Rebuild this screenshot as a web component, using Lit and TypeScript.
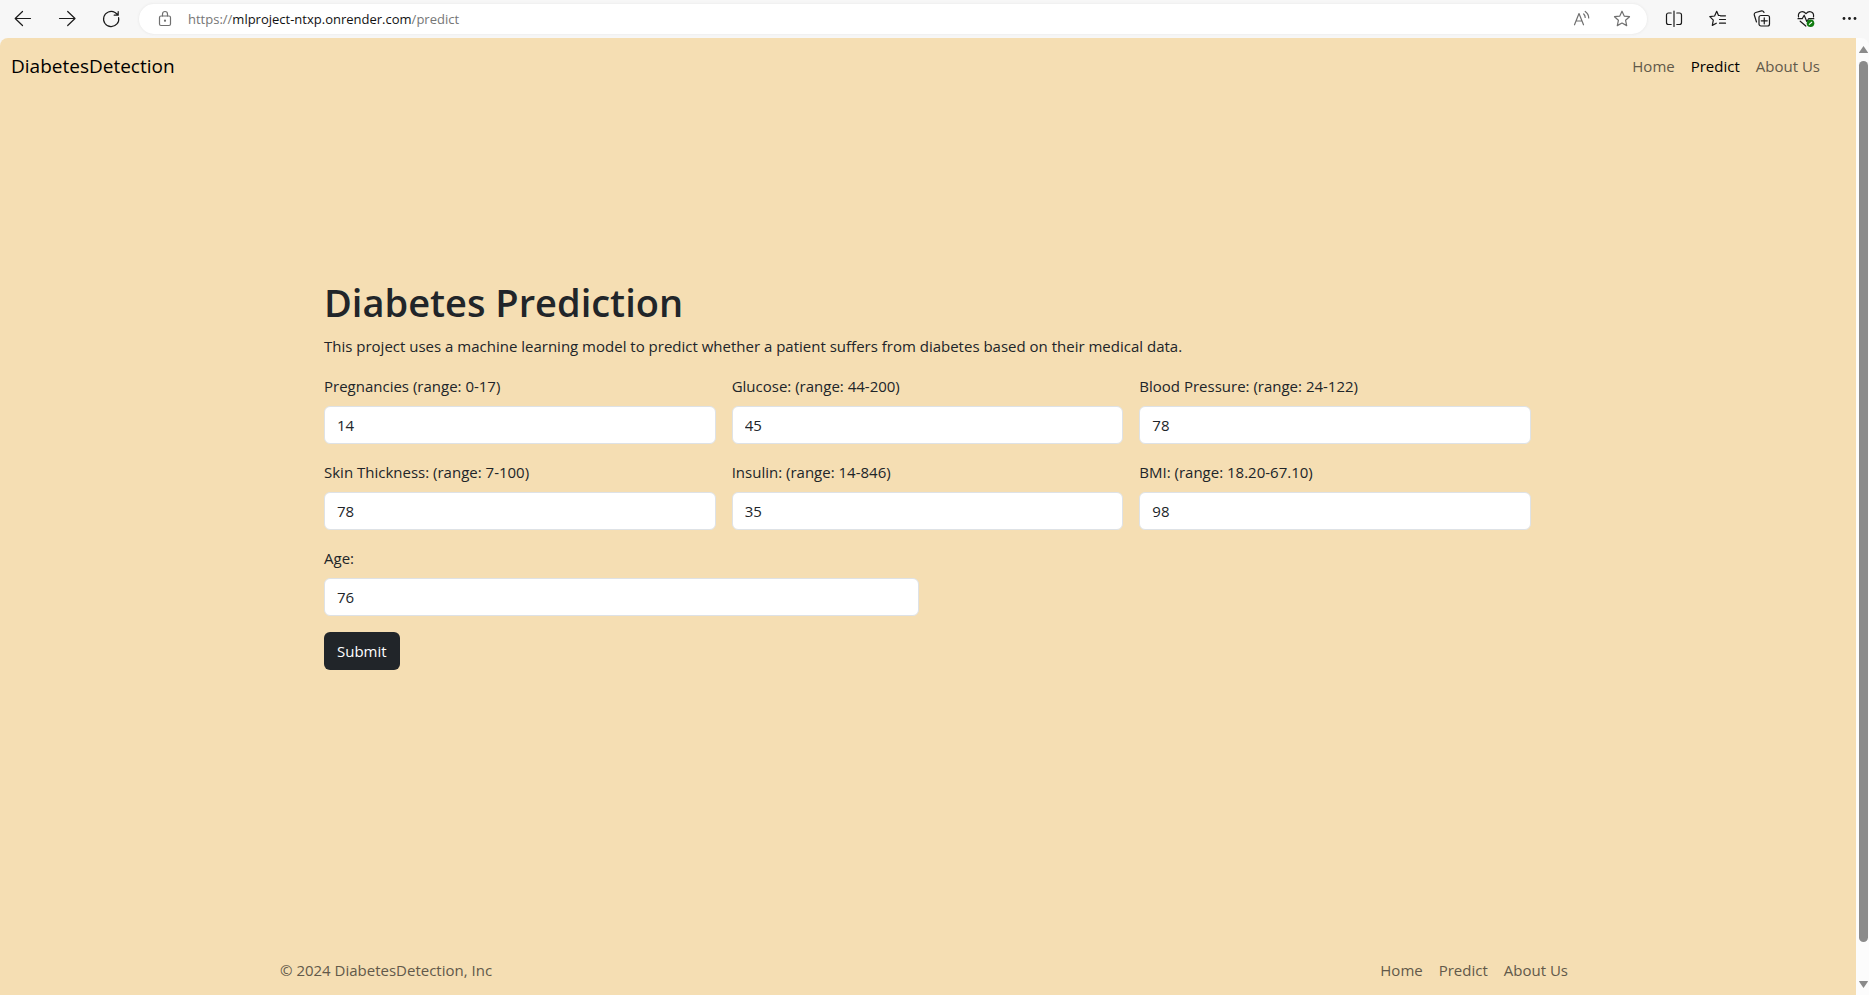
import { LitElement, html, css, svg } from 'lit';
import { customElement, property } from 'lit/decorators.js';

const stroke = (body: unknown) => svg`<g fill="none" stroke="currentColor" stroke-width="1.2" stroke-linecap="round" stroke-linejoin="round">${body}</g>`;

const ICONS: Record<string, unknown> = {
  back: stroke(svg`<path d="M17.500 9.500H2.500M9.500 2.500 2.200 9.500 9.500 16.500"/>`),
  forward: stroke(svg`<path d="M2.500 9.500h15.300M10.700 2.500 18 9.500 10.700 16.500"/>`),
  reload: stroke(svg`<path d="M17.600 8.500A7.600 7.600 0 1 1 14 3.500L17 5.800M17.200 2.500V6.200H13.200"/>`),
  lock: stroke(svg`<rect x="4.500" y="7" width="11" height="9.500" rx="1.500"/><path d="M7.500 7V5a2.500 2.500 0 0 1 5 0v2"/><circle cx="10" cy="11.700" r=".5" fill="currentColor"/>`),
  read: stroke(svg`<path d="M2.500 15.800 7 4.500 11.500 15.800M4 12h6M11.700 5q1.500 1.500 1.500 3.500M13.200 2.500q3.500 2.500 3.500 6.500"/>`),
  star: stroke(svg`<path d="M10 2.200 12.200 7.100 17.500 7.700 13.600 11.300 14.700 16.600 10 14 5.300 16.600 6.400 11.300 2.500 7.700 7.800 7.100Z"/>`),
  split: stroke(svg`<path d="M7.200 4H4.500A2 2 0 0 0 2.500 6v7.500a2 2 0 0 0 2 2h2.700M12.800 4h2.700a2 2 0 0 1 2 2v7.500a2 2 0 0 1-2 2h-2.700M10 2v15.500"/>`),
  favorites: stroke(svg`<path d="M12 6.500H10.500L8.700 2.300 6.600 7 1.800 7.600 5.300 11.200 4.300 16.400 8.300 14.200M12.500 6.800h5M11.500 10.500h6M11.500 14.200h6"/>`),
  collections: stroke(svg`<rect x="7" y="6.500" width="10.500" height="10.500" rx="2"/><path d="M12.250 8.800v6M9.250 11.800h6M4.500 13 2.300 6a2 2 0 0 1 1.400-2.500L9.500 1.900a2 2 0 0 1 2.500 1.600"/>`),
  health: svg`${stroke(svg`<path d="M2.500 7.800C1.700 3 6.600.8 10 4.600 13.400.8 18.300 3 17.500 7.800M2 9.700h4.200l2-3.500 2.600 6.300 1.800-2.800h5.200M4.200 12.200 9.800 17"/>`)}<circle cx="14.500" cy="14.300" r="3.800" fill="#107c10"/><path d="m13 15.600 3-2.600" stroke="#fff" stroke-width="1.100"/>`,
  more: svg`<g fill="currentColor"><circle cx="4" cy="9.500" r="1.400"/><circle cx="9.500" cy="9.500" r="1.400"/><circle cx="15" cy="9.500" r="1.400"/></g>`,
};

@customElement('tool-button')
class ToolButton extends LitElement {
  @property() icon = '';
  @property() label = '';

  static styles = css`
    :host { display: block; flex: none; }
    .button { display: block; width: 20px; height: 20px; padding: 0; border: 0; background: none; color: inherit; }
    .glyph { display: block; width: 20px; height: 20px; }
  `;

  render() {
    return html`<button class="button" type="button" aria-label=${this.label}>
      <svg class="glyph" viewBox="0 0 20 20" aria-hidden="true">${ICONS[this.icon]}</svg>
    </button>`;
  }
}

const FIELDS = [
  { id: 'pregnancies', label: 'Pregnancies (range: 0-17)', value: '14' },
  { id: 'glucose', label: 'Glucose: (range: 44-200)', value: '45' },
  { id: 'pressure', label: 'Blood Pressure: (range: 24-122)', value: '78' },
  { id: 'skin', label: 'Skin Thickness: (range: 7-100)', value: '78' },
  { id: 'insulin', label: 'Insulin: (range: 14-846)', value: '35' },
  { id: 'bmi', label: 'BMI: (range: 18.20-67.10)', value: '98' },
  { id: 'age', label: 'Age:', value: '76' },
];

@customElement('app-root')
class AppRoot extends LitElement {
  static styles = css`
    :host {
      display: flex; flex-direction: column; height: 100vh; overflow: hidden;
      background: #f7f7f7; color: #212529;
      font: 15px/24px "Segoe UI", "Open Sans", "Noto Sans", sans-serif;
    }
    * { box-sizing: border-box; }
    .toolbar { display: flex; align-items: center; flex: none; height: 38px; padding: 0 9px 0 13px; color: #1b1b1b; }
    .history { display: flex; gap: 24px; }
    .address {
      display: flex; align-items: center; flex: 1; height: 30px; margin: 0 17px 0 18px; padding: 0 15px 0 16px;
      border-radius: 15px; background: #fff; box-shadow: 0 0 3px #e4e4e4; color: #707070;
    }
    .url { flex: 1; margin-left: 13px; font-size: 13px; color: #767676; }
    .host { color: #111; }
    .page-actions { display: flex; gap: 20px; }
    .actions { display: flex; gap: 24px; }
    .viewport { display: flex; flex: 1; min-height: 0; }
    .page { display: flex; flex-direction: column; flex: 1; background: #f5deb3; border-top-left-radius: 8px; }
    .navbar { display: flex; align-items: center; justify-content: space-between; height: 56px; padding: 0 36px 0 11px; }
    .brand { font-size: 19px; color: #000; text-decoration: none; }
    .links { display: flex; gap: 16px; }
    .link { color: #62594a; text-decoration: none; }
    .active { color: #000; }
    .main { display: flex; flex-direction: column; flex: 1; justify-content: center; width: 100%; max-width: 1320px; margin: 0 auto; padding: 0 57px 0 56px; }
    .title { margin: 0 0 8px; font-size: 38px; line-height: 48px; font-weight: 600; }
    .lead { margin: 0 0 16px; }
    .form { display: grid; grid-template-columns: repeat(6, 1fr); gap: 16px; }
    .field { display: flex; flex-direction: column; gap: 8px; grid-column: span 2; }
    .half { grid-column: span 3; }
    .input { width: 100%; height: 38px; padding: 6px 12px; border: 1px solid #dee2e6; border-radius: 6px; background: #fff; color: inherit; font: inherit; }
    .row { grid-column: 1 / -1; }
    .submit { display: block; height: 38px; padding: 0 13px; border: 0; border-radius: 6px; background: #212529; color: #fff; font: inherit; }
    .footer { display: flex; justify-content: space-between; width: 100%; max-width: 1320px; margin: 0 auto; padding: 105px 20px 13px 12px; color: #62594a; }
    .scrollbar { display: flex; flex-direction: column; align-items: center; justify-content: space-between; gap: 8px; flex: none; width: 13px; padding: 8px 0 7px 2px; background: #fcfcfc; border-top-right-radius: 8px; }
    .arrow { flex: none; width: 9px; height: 7px; fill: #8b8b8b; }
    .track { flex: 1; width: 9px; padding-bottom: 31px; }
    .thumb { height: 100%; border-radius: 5px; background: #8b8b8b; }
  `;

  private links(active = '') {
    return html`<nav class="links">
      ${['Home', 'Predict', 'About Us'].map((t) => html`<a class="link ${t === active ? 'active' : ''}" href="#">${t}</a>`)}
    </nav>`;
  }

  render() {
    return html`
      <header class="toolbar">
        <div class="history">
          <tool-button icon="back" label="Back"></tool-button>
          <tool-button icon="forward" label="Forward"></tool-button>
          <tool-button icon="reload" label="Refresh"></tool-button>
        </div>
        <div class="address">
          <tool-button icon="lock" label="Site information"></tool-button>
          <span class="url">https://<span class="host">mlproject-ntxp.onrender.com</span>/predict</span>
          <div class="page-actions">
            <tool-button icon="read" label="Read aloud"></tool-button>
            <tool-button icon="star" label="Add to favorites"></tool-button>
          </div>
        </div>
        <div class="actions">
          <tool-button icon="split" label="Split screen"></tool-button>
          <tool-button icon="favorites" label="Favorites"></tool-button>
          <tool-button icon="collections" label="Collections"></tool-button>
          <tool-button icon="health" label="Browser essentials"></tool-button>
          <tool-button icon="more" label="More"></tool-button>
        </div>
      </header>
      <div class="viewport">
        <div class="page">
          <div class="navbar">
            <a class="brand" href="#">DiabetesDetection</a>
            ${this.links('Predict')}
          </div>
          <main class="main">
            <h1 class="title">Diabetes Prediction</h1>
            <p class="lead">This project uses a machine learning model to predict whether a patient suffers from diabetes based on their medical data.</p>
            <form class="form">
              ${FIELDS.map((f) => html`<div class="field ${f.id === 'age' ? 'half' : ''}">
                <label for=${f.id}>${f.label}</label>
                <input class="input" id=${f.id} type="text" .value=${f.value}>
              </div>`)}
              <div class="row"><button class="submit" type="button">Submit</button></div>
            </form>
          </main>
          <footer class="footer">
            <span>© 2024 DiabetesDetection, Inc</span>
            ${this.links()}
          </footer>
        </div>
        <div class="scrollbar" aria-hidden="true">
          <svg class="arrow" viewBox="0 0 9 7"><path d="M4.500 0 9 6.500Q9 7 8.500 7H.5Q0 7 0 6.500Z"/></svg>
          <div class="track"><div class="thumb"></div></div>
          <svg class="arrow" viewBox="0 0 9 7"><path d="M4.500 7 9 .5Q9 0 8.500 0H.5Q0 0 0 .5Z"/></svg>
        </div>
      </div>
    `;
  }
}
